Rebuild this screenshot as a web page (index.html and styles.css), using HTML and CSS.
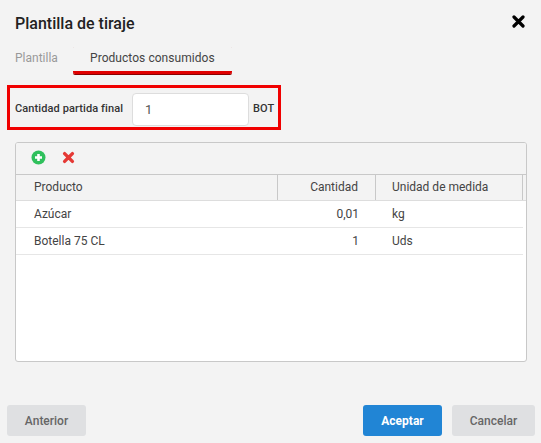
FILE: index.html
```html
<!DOCTYPE html>
<html lang="es">
<head>
    <meta charset="UTF-8">
    <meta name="viewport" content="width=device-width, initial-scale=1.0">
    <title>Plantilla de tiraje</title>
    <link rel="stylesheet" href="styles.css">
</head>
<body>
    <div class="dialog">
        <div class="dialog-header">
            <h1>Plantilla de tiraje</h1>
            <svg class="close-icon" width="13" height="13" viewBox="0 0 13 13">
                <path d="M2 2L11 11M11 2L2 11" stroke="#000" stroke-width="3.2" stroke-linecap="round"/>
            </svg>
        </div>

        <div class="tabs">
            <span class="tab">Plantilla</span>
            <span class="tab tab-active">Productos consumidos</span>
        </div>

        <div class="final-qty">
            <label for="finalQty">Cantidad partida final</label>
            <input type="text" id="finalQty" value="1">
            <span class="unit">BOT</span>
        </div>

        <div class="panel">
            <div class="toolbar">
                <svg class="add-icon" width="15" height="15" viewBox="0 0 15 15">
                    <circle cx="7.5" cy="7.5" r="7" fill="#2fc05c"/>
                    <path d="M7.5 4V11M4 7.5H11" stroke="#fff" stroke-width="2.6"/>
                </svg>
                <svg class="delete-icon" width="13" height="13" viewBox="0 0 13 13">
                    <path d="M2.6 2.6L10.4 10.4M10.4 2.6L2.6 10.4" stroke="#e53935" stroke-width="3.4" stroke-linecap="round"/>
                </svg>
            </div>
            <div class="grid grid-head">
                <div class="cell">Producto</div>
                <div class="cell num">Cantidad</div>
                <div class="cell">Unidad de medida</div>
            </div>
            <div class="grid grid-row">
                <div class="cell">Azúcar</div>
                <div class="cell num">0,01</div>
                <div class="cell">kg</div>
            </div>
            <div class="grid grid-row">
                <div class="cell">Botella 75 CL</div>
                <div class="cell num">1</div>
                <div class="cell">Uds</div>
            </div>
        </div>

        <div class="dialog-footer">
            <button type="button" class="btn">Anterior</button>
            <div class="footer-right">
                <button type="button" class="btn btn-primary">Aceptar</button>
                <button type="button" class="btn btn-cancel">Cancelar</button>
            </div>
        </div>
    </div>
</body>
</html>
```

FILE: styles.css
```css
html, body {
    margin: 0;
    height: 100%;
}

body {
    background-color: #f3f3f3;
    font-family: 'Roboto', sans-serif;
    font-size: 12px;
    color: #333;
    overflow: hidden;
}

.dialog {
    height: 443px;
    box-sizing: border-box;
    padding: 0 6px 7px 7px;
    display: flex;
    flex-direction: column;
}

.dialog-header {
    height: 46px;
    padding: 0 10px 0 8px;
    display: flex;
    align-items: center;
    justify-content: space-between;
}

.close-icon {
    margin-top: -3px;
}

h1 {
    margin: 0;
    font-size: 16px;
    font-weight: 500;
    color: #222;
}

.tabs {
    height: 29px;
    display: flex;
    padding-left: 8px;
}

.tab {
    color: #999;
    line-height: 24px;
}

.tab-active {
    margin-left: 15px;
    width: 159px;
    height: 28px;
    box-sizing: border-box;
    text-align: center;
    color: #444;
    letter-spacing: 0.05px;
    border-bottom: 3px solid #e00000;
    border-radius: 2px;
    box-shadow: 0 1px 0 #8a0000;
}

.final-qty {
    margin-top: 10px;
    width: 274px;
    height: 45px;
    box-sizing: border-box;
    border: 3px solid #f00000;
    padding: 2px 0 0 5px;
    display: flex;
    align-items: center;
}

.final-qty label {
    width: 117px;
    font-size: 11px;
    font-weight: 500;
    letter-spacing: 0.1px;
    color: #333;
}

.final-qty input {
    width: 117px;
    height: 33px;
    margin-top: 2px;
    box-sizing: border-box;
    border: 1px solid #ddd;
    border-radius: 4px;
    background-color: #fff;
    padding: 0 12px;
    font-family: 'Roboto', sans-serif;
    font-size: 13px;
    color: #555;
}

.unit {
    margin-left: 4px;
    font-size: 11px;
    font-weight: 500;
    letter-spacing: 0.1px;
}

.panel {
    margin: 12px 8px 0;
    width: 512px;
    height: 220px;
    box-sizing: border-box;
    border: 1px solid #c8c8c8;
    border-radius: 3px;
    background-color: #fff;
    overflow: hidden;
}

.toolbar {
    height: 29px;
    padding: 0 0 2px 15px;
    background-color: #f3f3f3;
    border-bottom: 1px solid #c8c8c8;
    display: flex;
    align-items: center;
    gap: 16px;
}

.grid {
    display: grid;
    grid-template-columns: 262px 98px 147px;
    width: 507px;
    box-sizing: border-box;
}

.grid-head {
    height: 26px;
    line-height: 25px;
    background-color: #f3f3f3;
    width: 100%;
    border-bottom: 1px solid #ddd;
}

.grid-head .cell {
    border-right: 1px solid #c8c8c8;
    color: #444;
}

.grid-row {
    height: 27px;
    line-height: 26px;
    border-bottom: 1px solid #e6e6e6;
}

.cell {
    padding: 0 17px;
    box-sizing: border-box;
    white-space: nowrap;
    color: #444;
}

.cell:first-child {
    padding-left: 18px;
}

.cell:last-child {
    padding-left: 16px;
}

.num {
    text-align: right;
}

.dialog-footer {
    margin-top: auto;
    display: flex;
    justify-content: space-between;
}

.footer-right {
    display: flex;
    gap: 10px;
}

.btn {
    width: 79px;
    height: 31px;
    border: none;
    border-radius: 3px;
    background-color: #dfe0e2;
    color: #666;
    font-family: 'Roboto', sans-serif;
    font-size: 12px;
    font-weight: 500;
}

.btn-primary {
    background-color: #2185d5;
    color: #fff;
    font-weight: 700;
}

.btn-cancel {
    width: 83px;
}
```
